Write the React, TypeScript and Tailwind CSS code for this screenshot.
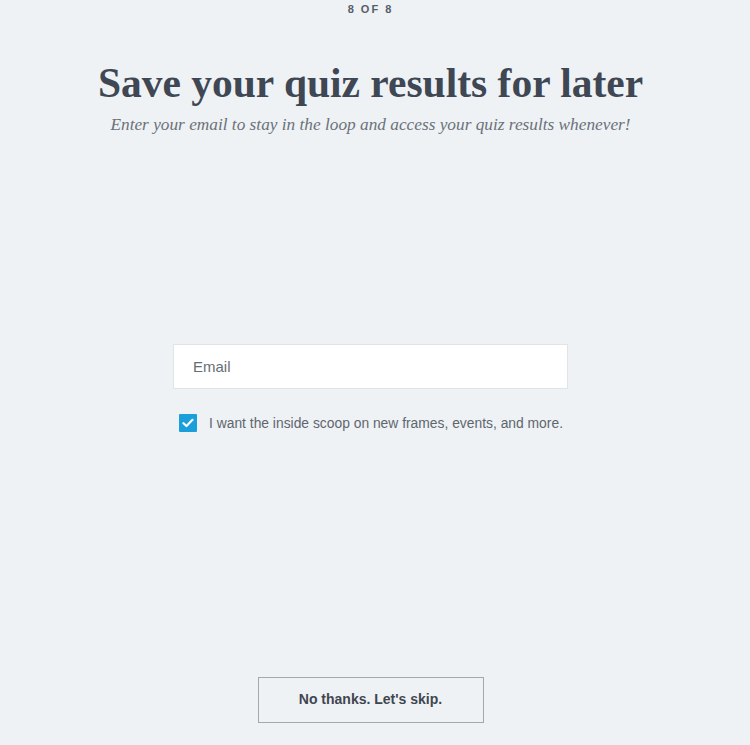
import React from "react";

export default function App() {
  return (
    <div className="w-[750px] h-[745px] bg-[#eef2f5] overflow-hidden">
      <div className="w-[741px] flex flex-col items-center">
        <div className="mt-[3px] text-[11px] leading-[12px] font-bold tracking-[0.18em] text-[#555e69] font-['Liberation_Sans',Arial,sans-serif]">
          8 OF 8
        </div>
        <h1 className="mt-[46px] text-[41.5px] leading-[44px] font-bold text-[#3e4753] font-['Liberation_Serif','Times_New_Roman',serif]">
          Save your quiz results for later
        </h1>
        <p className="mt-[10px] text-[17.3px] leading-[20px] italic text-[#6b7179] font-['Liberation_Serif','Times_New_Roman',serif]">
          Enter your email to stay in the loop and access your quiz results whenever!
        </p>
        <div className="mt-[209px] w-[395px] flex flex-col">
          <input
            type="text"
            placeholder="Email"
            className="h-[45px] w-full bg-white border border-[#dfe4e8] px-[19px] text-[15px] text-[#4b5563] placeholder:text-[#676d74] outline-none font-['Liberation_Sans',Arial,sans-serif]"
          />
          <label className="mt-[24px] ml-[6px] flex items-center gap-[12px] text-[13.85px] text-[#60666e] font-['Liberation_Sans',Arial,sans-serif]">
            <span className="w-[18px] h-[18px] bg-[#1a9fdb] flex items-center justify-center rounded-[1px]">
              <svg width="12" height="10" viewBox="0 0 12 10">
                <path d="M1.5 5.2 L4.5 8 L10.5 1.8" fill="none" stroke="white" strokeWidth="2.2" strokeLinecap="round" strokeLinejoin="round" />
              </svg>
            </span>
            I want the inside scoop on new frames, events, and more.
          </label>
        </div>
        <button className="mt-[243px] w-[226px] h-[46px] border border-[#a3a8ad] text-[14px] font-bold text-[#3f4650] font-['Liberation_Sans',Arial,sans-serif]">
          No thanks. Let's skip.
        </button>
      </div>
    </div>
  );
}
